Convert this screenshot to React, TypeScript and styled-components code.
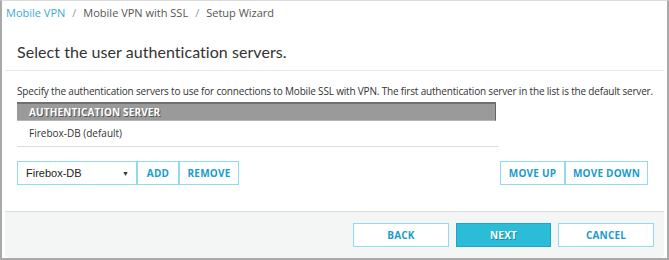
import styled, { createGlobalStyle } from "styled-components"

const Global = createGlobalStyle`
  html, body { margin: 0; padding: 0; background: #fff; }
  * { box-sizing: border-box; }
`

const Frame = styled.div`
  width: 669px;
  height: 260px;
  border: 2px solid #a9a9a9;
  border-top: 1px solid #dcdcdc;
  padding: 0 3px;
  display: flex;
  flex-direction: column;
  font-family: "Open Sans", sans-serif;
  color: #333;
`

const Crumbs = styled.div`
  height: 28px;
  padding: 5px 0 0 1px;
  font-size: 11px;
  line-height: 14px;
  color: #555;
  display: flex;
  gap: 7px;
`

const CrumbLink = styled.span`
  color: #3aa9da;
`

const Sep = styled.span`
  color: #999;
`

const TitleBar = styled.div`
  height: 42px;
  padding: 13px 0 0 12px;
  border-bottom: 1px solid #e8e8e8;
`

const Title = styled.h1`
  margin: 0;
  font-family: Lato, sans-serif;
  font-weight: 400;
  font-size: 16px;
  line-height: 20px;
  color: #333;
  letter-spacing: 0.05px;
`

const Body = styled.div`
  flex: 1;
  padding: 13px 12px 0 12px;
`

const Desc = styled.p`
  margin: 0;
  font-size: 10px;
  line-height: 15px;
  white-space: nowrap;
  letter-spacing: -0.18px;
`

const Table = styled.div`
  width: 482px;
  margin-top: 3px;
`

const HeadRow = styled.div`
  width: 479px;
  height: 19px;
  background: #9a9a9a;
  border-top: 2px solid #707070;
  border-right: 1px solid #666;
  border-bottom: 1px solid #b5b5b5;
  padding-left: 12px;
  font-size: 10px;
  font-weight: 700;
  line-height: 16px;
  color: #fff;
  letter-spacing: 0.15px;
  text-shadow: 1px 1px 0 #555;
`

const Row = styled.div`
  height: 26px;
  border-bottom: 1px solid #dedede;
  padding: 5px 0 0 12px;
  font-size: 10px;
  line-height: 14px;
`

const Controls = styled.div`
  margin-top: 14px;
  padding-right: 4px;
  display: flex;
  justify-content: space-between;
`

const Group = styled.div`
  display: flex;
`

const Select = styled.div`
  width: 120px;
  height: 24px;
  border: 1px solid #8fdcee;
  padding: 0 7px 0 8px;
  display: flex;
  align-items: center;
  justify-content: space-between;
  font-family: "Liberation Sans", Arial, sans-serif;
  font-size: 11px;
  color: #222;
`

const Caret = styled.span`
  font-size: 7px;
  color: #333;
`

const Btn = styled.div<{ $w: number; $primary?: boolean }>`
  width: ${p => p.$w}px;
  height: 24px;
  display: flex;
  align-items: center;
  justify-content: center;
  border: 1px solid ${p => (p.$primary ? "#1aa6c6" : "#8fdcee")};
  background: ${p => (p.$primary ? "#2bbdd8" : "#fff")};
  color: ${p => (p.$primary ? "#fff" : "#1a9cca")};
  text-shadow: ${p => (p.$primary ? "1px 1px 0 #1686a0" : "none")};
  font-size: 10px;
  font-weight: 700;
  letter-spacing: 0.2px;
`

const Footer = styled.div`
  height: 47px;
  border-top: 1px solid #dcdcdc;
  background: #f4f5f5;
  border-radius: 0 0 4px 4px;
  display: flex;
  justify-content: flex-end;
  align-items: flex-start;
  gap: 7px;
  padding: 11px 10px 0 0;
`

export default function App() {
  return (
    <>
      <Global />
      <Frame>
        <Crumbs>
          <CrumbLink>Mobile VPN</CrumbLink>
          <Sep>/</Sep>
          <span>Mobile VPN with SSL</span>
          <Sep>/</Sep>
          <span>Setup Wizard</span>
        </Crumbs>
        <TitleBar>
          <Title>Select the user authentication servers.</Title>
        </TitleBar>
        <Body>
          <Desc>
            Specify the authentication servers to use for connections to Mobile SSL with VPN. The first
            authentication server in the list is the default server.
          </Desc>
          <Table>
            <HeadRow>AUTHENTICATION SERVER</HeadRow>
            <Row>Firebox-DB (default)</Row>
          </Table>
          <Controls>
            <Group>
              <Select>
                <span>Firebox-DB</span>
                <Caret>▼</Caret>
              </Select>
              <Btn $w={42}>ADD</Btn>
              <Btn $w={60}>REMOVE</Btn>
            </Group>
            <Group>
              <Btn $w={65}>MOVE UP</Btn>
              <Btn $w={83}>MOVE DOWN</Btn>
            </Group>
          </Controls>
        </Body>
        <Footer>
          <Btn $w={96}>BACK</Btn>
          <Btn $w={95} $primary>NEXT</Btn>
          <Btn $w={96}>CANCEL</Btn>
        </Footer>
      </Frame>
    </>
  )
}
